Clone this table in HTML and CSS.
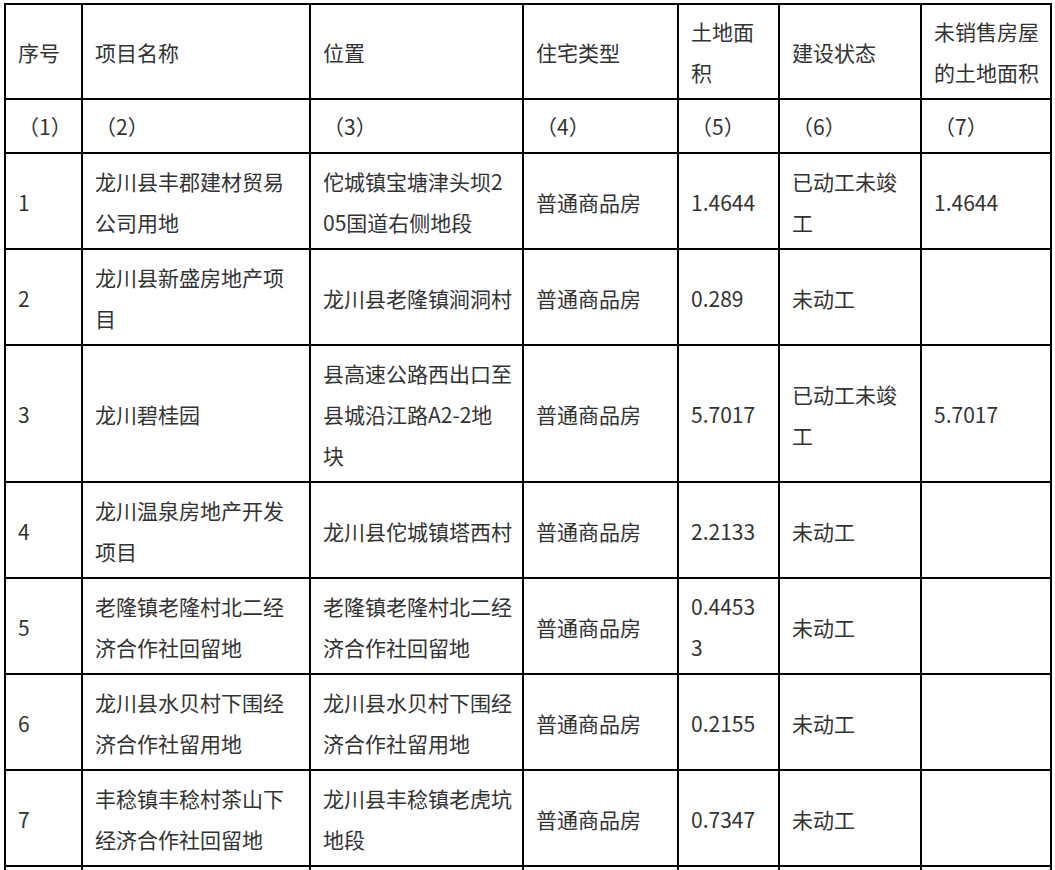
FILE: index.html
```html
<!DOCTYPE html>
<html lang="zh-CN">
<head>
<meta charset="utf-8">
<title>未销售房屋土地</title>
<link rel="stylesheet" href="styles.css">
</head>
<body>
<table class="land">
  <colgroup>
    <col class="c1"><col class="c2"><col class="c3"><col class="c4"><col class="c5"><col class="c6"><col class="c7">
  </colgroup>
  <tbody>
    <tr class="head">
      <td>序号</td>
      <td>项目名称</td>
      <td>位置</td>
      <td>住宅类型</td>
      <td>土地面<br>积</td>
      <td>建设状态</td>
      <td>未销售房屋<br>的土地面积</td>
    </tr>
    <tr class="nums">
      <td>（1）</td>
      <td>（2）</td>
      <td>（3）</td>
      <td>（4）</td>
      <td>（5）</td>
      <td>（6）</td>
      <td>（7）</td>
    </tr>
    <tr>
      <td>1</td>
      <td>龙川县丰郡建材贸易<br>公司用地</td>
      <td>佗城镇宝塘津头坝2<br>05国道右侧地段</td>
      <td>普通商品房</td>
      <td>1.4644</td>
      <td>已动工未竣<br>工</td>
      <td>1.4644</td>
    </tr>
    <tr>
      <td>2</td>
      <td>龙川县新盛房地产项<br>目</td>
      <td>龙川县老隆镇涧洞村</td>
      <td>普通商品房</td>
      <td>0.289</td>
      <td>未动工</td>
      <td></td>
    </tr>
    <tr>
      <td>3</td>
      <td>龙川碧桂园</td>
      <td>县高速公路西出口至<br>县城沿江路A2-2地<br>块</td>
      <td>普通商品房</td>
      <td>5.7017</td>
      <td>已动工未竣<br>工</td>
      <td>5.7017</td>
    </tr>
    <tr>
      <td>4</td>
      <td>龙川温泉房地产开发<br>项目</td>
      <td>龙川县佗城镇塔西村</td>
      <td>普通商品房</td>
      <td>2.2133</td>
      <td>未动工</td>
      <td></td>
    </tr>
    <tr>
      <td>5</td>
      <td>老隆镇老隆村北二经<br>济合作社回留地</td>
      <td>老隆镇老隆村北二经<br>济合作社回留地</td>
      <td>普通商品房</td>
      <td>0.4453<br>3</td>
      <td>未动工</td>
      <td></td>
    </tr>
    <tr>
      <td>6</td>
      <td>龙川县水贝村下围经<br>济合作社留用地</td>
      <td>龙川县水贝村下围经<br>济合作社留用地</td>
      <td>普通商品房</td>
      <td>0.2155</td>
      <td>未动工</td>
      <td></td>
    </tr>
    <tr>
      <td>7</td>
      <td>丰稔镇丰稔村茶山下<br>经济合作社回留地</td>
      <td>龙川县丰稔镇老虎坑<br>地段</td>
      <td>普通商品房</td>
      <td>0.7347</td>
      <td>未动工</td>
      <td></td>
    </tr>
    <tr class="tail">
      <td></td>
      <td></td>
      <td></td>
      <td></td>
      <td></td>
      <td></td>
      <td></td>
    </tr>
  </tbody>
</table>
</body>
</html>
```
FILE: styles.css
```css
html, body {
  margin: 0;
  padding: 0;
  background: #ffffff;
}

body {
  overflow: hidden;
  font-family: "Noto Sans CJK SC", "Microsoft YaHei", "Noto Sans", sans-serif;
  color: #333333;
}

.land {
  border-collapse: collapse;
  table-layout: fixed;
  width: 1048px;
  margin: 3px 0 0 4px;
  font-size: 21px;
  line-height: 41px;
}

.c1 { width: 77px; }
.c2 { width: 228px; }
.c3 { width: 213px; }
.c4 { width: 155px; }
.c5 { width: 101px; }
.c6 { width: 142px; }
.c7 { width: 130px; }

.land td {
  border: 2px solid #000000;
  padding: 7px 6px 5px 12px;
  vertical-align: middle;
  text-align: left;
  white-space: nowrap;
  overflow: hidden;
}

.land .head td,
.land .nums td {
  padding-top: 6px;
  padding-bottom: 5px;
}

.land .tail td {
  height: 41px;
}
```
